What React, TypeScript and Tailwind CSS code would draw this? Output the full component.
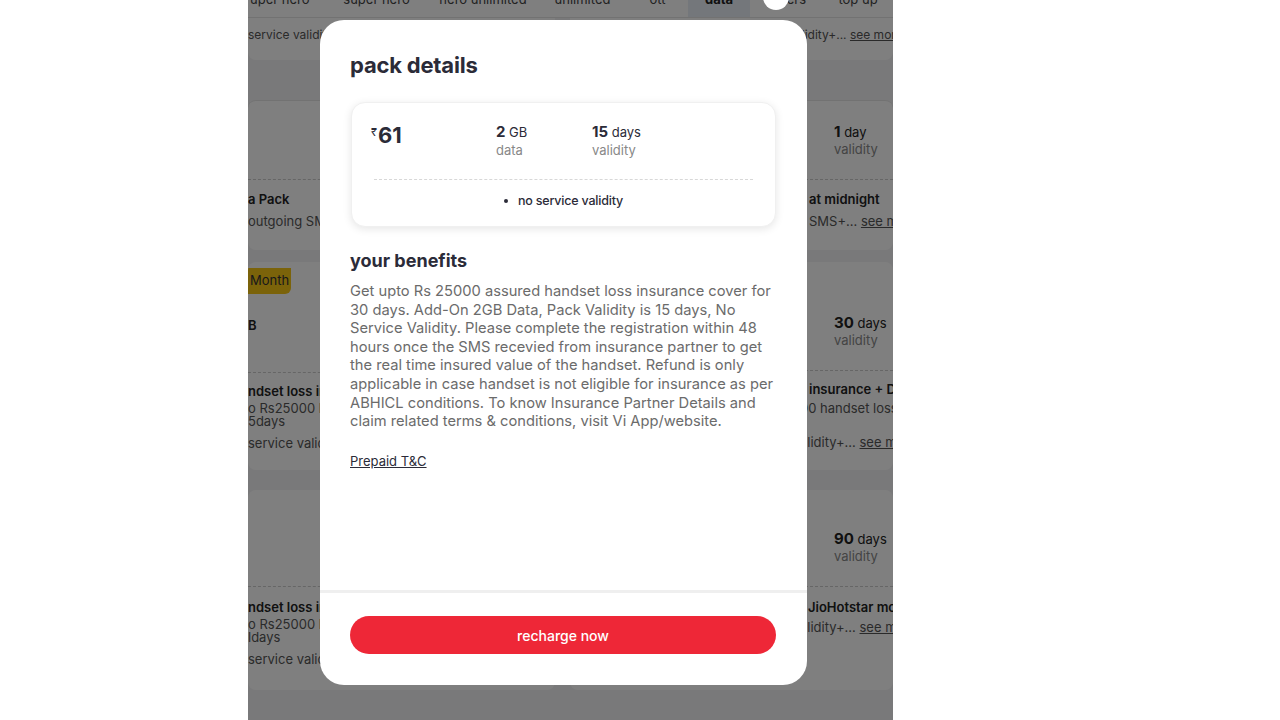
import React from 'react';

const tabs: { label: string; w: string; active?: boolean }[] = [
  { label: 'uper hero', w: 'w-[77px] justify-start pl-[2px]' },
  { label: 'super hero', w: 'w-[103px] justify-center' },
  { label: 'hero unlimited', w: 'w-[110px] justify-center' },
  { label: 'unlimited', w: 'w-[89px] justify-center' },
  { label: 'ott', w: 'w-[61px] justify-center' },
  { label: 'data', w: 'w-[62px] justify-center', active: true },
  { label: 'others', w: 'w-[73px] justify-center' },
  { label: 'top up', w: 'w-[70px] justify-center' },
];

const BgCard: React.FC<{ side: 'left' | 'right'; className?: string; children?: React.ReactNode }> = ({ side, className, children }) => (
  <div className={`${side === 'left' ? 'w-[307px]' : 'w-[323px] ml-[15px]'} bg-white rounded-lg overflow-hidden relative ${className || ''}`}>
    {children}
  </div>
);

const App: React.FC = () => {
  return (
    <div className="w-full h-[720px] overflow-hidden bg-white flex pl-[248px]" style={{ fontFamily: 'Inter, "Open Sans", sans-serif' }}>
      <div className="relative w-[645px] h-[720px] overflow-hidden bg-[#f2f2f4] shrink-0">
        {/* tabs */}
        <div className="h-[18px] bg-white border-b border-[#e5e5e5] flex text-[13px] text-[#444] leading-none">
          {tabs.map((t) => (
            <div
              key={t.label}
              className={`h-full flex items-end pb-[11px] whitespace-nowrap ${t.w} ${t.active ? 'bg-[#e8eef6] font-bold text-[#222]' : ''}`}
            >
              {t.label}
            </div>
          ))}
        </div>

        {/* row A */}
        <div className="flex">
          <BgCard side="left" className="h-[42px] rounded-t-none">
            <div className="pt-[8px] text-[12px] text-[#555]">service validity</div>
          </BgCard>
          <BgCard side="right" className="h-[42px] rounded-t-none">
            <div className="pt-[8px] text-[12px] text-[#555] pl-[225px] whitespace-nowrap">
              alidity+... <span className="underline">see more</span>
            </div>
          </BgCard>
        </div>

        {/* row B */}
        <div className="flex mt-[40px]">
          <BgCard side="left" className="h-[150px] border-t border-[#e5e5e5]">
            <div className="h-[78px]" />
            <div className="border-t border-dashed border-[#ccc]" />
            <div className="pt-[10px] text-[13px] font-semibold text-[#222]">a Pack</div>
            <div className="text-[13px] text-[#555] mt-[2px]">outgoing SMS</div>
          </BgCard>
          <BgCard side="right" className="h-[150px] border-t border-[#e5e5e5]">
            <div className="h-[78px] pl-[264px] pt-[22px] leading-[17px]">
              <div className="text-[13px] text-[#222]"><span className="font-bold text-[15px]">1</span> day</div>
              <div className="text-[13px] text-[#888]">validity</div>
            </div>
            <div className="border-t border-dashed border-[#ccc]" />
            <div className="pt-[10px] pl-[239px] whitespace-nowrap text-[13px] font-semibold text-[#222]">at midnight</div>
            <div className="pl-[239px] whitespace-nowrap text-[13px] text-[#555] mt-[2px]">SMS+... <span className="underline">see more</span></div>
          </BgCard>
        </div>

        {/* row C */}
        <div className="flex mt-[12px]">
          <BgCard side="left" className="h-[208px]">
            <div className="inline-block bg-[#f7c615] text-[13px] text-[#333] px-[2px] py-[3px] rounded-br-md mt-[6px]">Month</div>
            <div className="pt-[22px] text-[13px] text-[#222] font-semibold h-[78px]">B</div>
            <div className="border-t border-dashed border-[#ccc]" />
            <div className="pt-[10px] text-[13px] font-semibold text-[#222] leading-[16px]">ndset loss insurance</div>
            <div className="text-[13px] text-[#555] leading-[14px] mt-[2px]">o Rs25000 handset</div>
            <div className="text-[13px] text-[#555] leading-[13px]">5days</div>
            <div className="text-[13px] text-[#555] mt-[6px]">service validity</div>
          </BgCard>
          <BgCard side="right" className="h-[208px]">
            <div className="h-[108px] pl-[264px] pt-[52px] leading-[17px]">
              <div className="text-[13px] text-[#222] whitespace-nowrap"><span className="font-bold text-[15px]">30</span> days</div>
              <div className="text-[13px] text-[#888]">validity</div>
            </div>
            <div className="border-t border-dashed border-[#ccc]" />
            <div className="pt-[10px] pl-[239px] whitespace-nowrap text-[13px] font-semibold text-[#222] leading-[16px]">insurance + Data</div>
            <div className="pl-[230px] whitespace-nowrap text-[13px] text-[#555] mt-[2px]">00 handset loss</div>
            <div className="pl-[230px] whitespace-nowrap text-[13px] text-[#555] mt-[14px]">alidity+... <span className="underline">see more</span></div>
          </BgCard>
        </div>

        {/* row D */}
        <div className="flex mt-[20px]">
          <BgCard side="left" className="h-[200px]">
            <div className="h-[96px]" />
            <div className="border-t border-dashed border-[#ccc]" />
            <div className="pt-[12px] text-[13px] font-semibold text-[#222] leading-[16px]">ndset loss insurance</div>
            <div className="text-[13px] text-[#555] leading-[14px] mt-[2px]">o Rs25000 handset</div>
            <div className="text-[13px] text-[#555] leading-[13px]">ldays</div>
            <div className="text-[13px] text-[#555] mt-[6px]">service validity</div>
          </BgCard>
          <BgCard side="right" className="h-[200px]">
            <div className="h-[96px] pl-[264px] pt-[40px] leading-[17px]">
              <div className="text-[13px] text-[#222] whitespace-nowrap"><span className="font-bold text-[15px]">90</span> days</div>
              <div className="text-[13px] text-[#888]">validity</div>
            </div>
            <div className="border-t border-dashed border-[#ccc]" />
            <div className="pt-[12px] pl-[238px] whitespace-nowrap text-[13px] font-semibold text-[#222] leading-[16px]">JioHotstar mobile</div>
            <div className="pl-[230px] whitespace-nowrap text-[13px] text-[#555] mt-[3px]">alidity+... <span className="underline">see more</span></div>
          </BgCard>
        </div>

        {/* dim overlay */}
        <div className="absolute inset-0 bg-black/50" />

        {/* modal */}
        <div className="absolute left-[72px] top-[20px] w-[487px] h-[665px] bg-white rounded-[24px] flex flex-col">
          <div className="absolute right-[18px] top-[-36px] w-[26px] h-[26px] rounded-full bg-white" />
          <div className="flex-1 px-[30px] pt-[31px]">
            <h2 className="text-[22px] leading-[28px] font-bold text-[#2b2b38] tracking-[-0.2px]">pack details</h2>

            <div className="mt-[23px] ml-px w-[425px] rounded-[14px] bg-white border border-[#f0f0f0] shadow-[0_2px_8px_rgba(0,0,0,0.10)] px-[20px] pt-[20px] pb-[16px]">
              <div className="flex items-start h-[56px]">
                <div className="w-[125px] flex items-start text-[#2b2b38] -ml-[1px]">
                  <span className="text-[11px] leading-none mt-[4px] mr-[1px]">₹</span>
                  <span className="text-[22px] leading-[24px] font-bold">61</span>
                </div>
                <div className="w-[96px] leading-[18px]">
                  <div className="text-[13px] text-[#2b2b38]"><span className="font-bold text-[15px]">2</span> GB</div>
                  <div className="text-[13px] text-[#888]">data</div>
                </div>
                <div className="leading-[18px]">
                  <div className="text-[13px] text-[#2b2b38]"><span className="font-bold text-[15px]">15</span> days</div>
                  <div className="text-[13px] text-[#888]">validity</div>
                </div>
              </div>
              <div className="mx-[2px] border-t border-dashed border-[#d8d8d8]" />
              <div className="flex justify-center items-center mt-[12px] text-[12.5px] font-medium text-[#2b2b38] leading-[18px] tracking-[-0.2px]">
                <span className="w-[4px] h-[4px] rounded-full bg-[#2b2b38] mr-[10px]" />
                no service validity
              </div>
            </div>

            <h3 className="mt-[22px] text-[18px] leading-[24px] font-bold text-[#2b2b38]">your benefits</h3>
            <p className="mt-[9px] text-[14.7px] leading-[18.6px] text-[#6b6b6b]">
              Get upto Rs 25000 assured handset loss insurance cover for 30 days. Add-On 2GB Data, Pack Validity is 15 days, No Service Validity. Please complete the registration within 48 hours once the SMS recevied from insurance partner to get the real time insured value of the handset. Refund is only applicable in case handset is not eligible for insurance as per ABHICL conditions. To know Insurance Partner Details and claim related terms &amp; conditions, visit Vi App/website.
            </p>
            <a className="inline-block mt-[21px] text-[13px] text-[#2b2b38] underline leading-[18px]">Prepaid T&amp;C</a>
          </div>

          <div className="h-[95px] border-t-[3px] border-[#efefef] px-[30px] pt-[23px] shrink-0">
            <button className="w-[426px] h-[38px] rounded-full bg-[#ee2737] text-white text-[14px] font-medium">
              recharge now
            </button>
          </div>
        </div>
      </div>
    </div>
  );
};

export default App;
